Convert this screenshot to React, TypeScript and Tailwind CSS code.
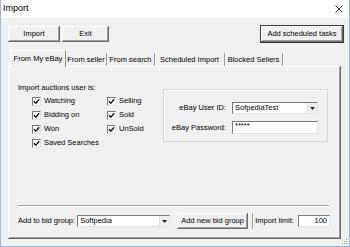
import React from 'react';

const raised = 'shadow-[inset_-1px_-1px_#696969,inset_1px_1px_#ffffff,inset_-2px_-2px_#a0a0a0]';
const sunken = 'border border-t-[#7a7a7a] border-l-[#7a7a7a] border-r-[#e3e3e3] border-b-[#e3e3e3] bg-white';

const Button: React.FC<{ label: string; w: string; def?: boolean }> = ({ label, w, def }) => (
  <div className={`${w} h-[16px] flex items-center justify-center bg-[#f0f0f0] ${def ? 'outline outline-1 outline-[#3c3c3c]' : ''} ${raised}`}>
    {label}
  </div>
);

const Check: React.FC<{ label: string }> = ({ label }) => (
  <div className="flex items-center h-[14px]">
    <span className={`w-[9px] h-[9px] flex items-center justify-center ${sunken}`}>
      <svg width="7" height="7" viewBox="0 0 7 7">
        <path d="M0.8 3.2 L2.8 5.2 L6.2 1.2" stroke="#1a1a1a" strokeWidth="1.4" fill="none" />
      </svg>
    </span>
    <span className="ml-[3px]">{label}</span>
  </div>
);

const Combo: React.FC<{ value: string; w: string }> = ({ value, w }) => (
  <div className={`${w} h-[12px] flex items-center ${sunken}`}>
    <span className="flex-1 pl-[2px] leading-[10px] truncate">{value}</span>
    <span className="w-[10px] h-[10px] flex items-center justify-center bg-[#f0f0f0] border-l border-[#e0e0e0]">
      <svg width="5" height="3" viewBox="0 0 5 3">
        <path d="M0 0 H5 L2.5 3 Z" fill="#222" />
      </svg>
    </span>
  </div>
);

const tabs = [
  { label: 'From seller', w: 'w-[41px]' },
  { label: 'From search', w: 'w-[48px]' },
  { label: 'Scheduled Import', w: 'w-[70px]' },
  { label: 'Blocked Sellers', w: 'w-[58px]' },
];

export default function App() {
  return (
    <div
      className="relative w-[350px] h-[247px] bg-[#f0f0f0] border-x border-b border-[#9fb4dc] text-[7.5px] text-black overflow-hidden"
      style={{ fontFamily: '"Liberation Sans", Arial, sans-serif' }}
    >
      {/* Title bar */}
      <div className="h-[18px] bg-white flex items-center justify-between pl-[2px] pr-[6px]">
        <span className="text-[9px]">Import</span>
        <svg width="8" height="8" viewBox="0 0 8 8">
          <path d="M0.5 0.5 L7.5 7.5 M7.5 0.5 L0.5 7.5" stroke="#222" strokeWidth="0.9" />
        </svg>
      </div>

      {/* Top buttons */}
      <div className="mt-[8px] pl-[7px] pr-[6px] flex items-center">
        <Button label="Import" w="w-[52px]" />
        <div className="ml-[2px]">
          <Button label="Exit" w="w-[47px]" />
        </div>
        <div className="ml-auto">
          <Button label="Add scheduled tasks" w="w-[82px]" def />
        </div>
      </div>

      {/* Tabs */}
      <div className="mt-[8px] ml-[9px] h-[16px] flex items-end">
        <div className="w-[56px] h-[17px] mb-[-1px] relative z-10 bg-[#f0f0f0] border-l border-t border-white border-r border-r-[#8a8a8a] flex items-center justify-center pb-[1px]">
          From My eBay
        </div>
        {tabs.map((t) => (
          <div key={t.label} className={`${t.w} h-[13px] flex items-center justify-center border-r border-[#9a9a9a] shadow-[1px_0_#ffffff]`}>
            {t.label}
          </div>
        ))}
      </div>

      {/* Panel */}
      <div className={`ml-[7px] w-[333px] h-[173px] flex flex-col ${raised}`}>
        <div className="h-[139px] pt-[17px] pl-[10px] flex items-start">
          <div className="w-[145px]">
            <div className="h-[10px] leading-[10px]">Import auctions user is:</div>
            <div className="mt-[1px] ml-[14px] grid grid-cols-[75px_auto]">
              <Check label="Watching" />
              <Check label="Selling" />
              <Check label="Bidding on" />
              <Check label="Sold" />
              <Check label="Won" />
              <Check label="UnSold" />
              <Check label="Saved Searches" />
            </div>
          </div>
          <div className="mt-[6px] w-[165px] h-[53px] border border-[#d5d5d5] shadow-[inset_1px_1px_#ffffff] pt-[12px] grid grid-cols-[62px_86px] gap-x-[6px] gap-y-[7px] content-start">
            <div className="h-[12px] flex items-center justify-end">eBay User ID:</div>
            <Combo value="SofpediaTest" w="w-[86px]" />
            <div className="h-[13px] flex items-center justify-end">eBay Password:</div>
            <div className={`w-[86px] h-[13px] flex items-start pl-[2px] leading-[8px] ${sunken}`}>*****</div>
          </div>
        </div>

        <div className="ml-[10px] w-[311px] h-[2px] border-t border-[#a0a0a0] border-b border-b-white" />

        <div className="mt-[6px] ml-[10px] h-[16px] flex items-center">
          <span>Add to bid group:</span>
          <div className="ml-[2px]">
            <Combo value="Softpedia" w="w-[93px]" />
          </div>
          <div className="ml-[7px]">
            <Button label="Add new bid group" w="w-[71px]" />
          </div>
          <div className="ml-[4px] w-[2px] h-[16px] border-l border-[#a0a0a0] border-r border-r-white" />
          <span className="ml-[1px]">Import limit:</span>
          <div className={`ml-auto mr-[11px] w-[32px] h-[12px] flex items-center justify-end pr-[2px] ${sunken}`}>100</div>
        </div>
      </div>

      {/* Resize grip */}
      <svg className="absolute right-[1px] bottom-[1px]" width="8" height="8" viewBox="0 0 8 8">
        <g fill="#a0a0a0">
          <rect x="6" y="2" width="1" height="1" />
          <rect x="4" y="4" width="1" height="1" />
          <rect x="6" y="4" width="1" height="1" />
          <rect x="2" y="6" width="1" height="1" />
          <rect x="4" y="6" width="1" height="1" />
          <rect x="6" y="6" width="1" height="1" />
        </g>
      </svg>
    </div>
  );
}
